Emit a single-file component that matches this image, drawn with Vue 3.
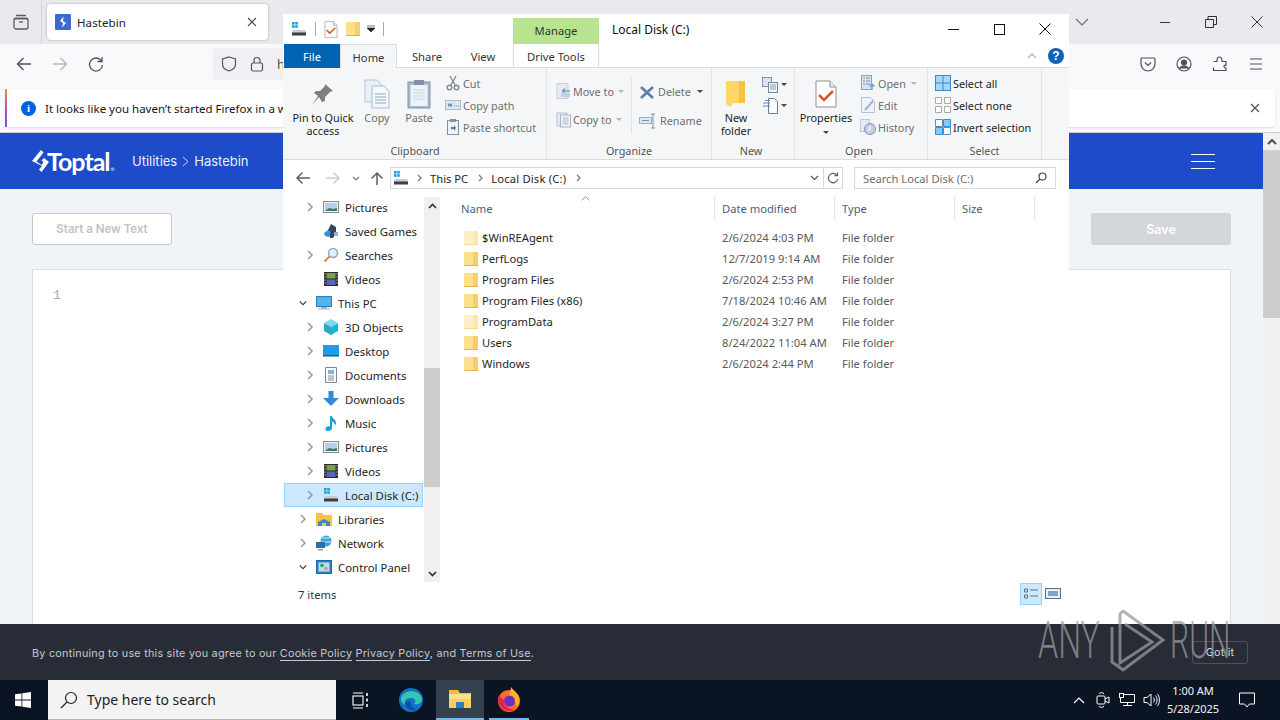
<script setup>
const smallClip = [
  { label: 'Cut', icon: 'cut' },
  { label: 'Copy path', icon: 'copypath' },
  { label: 'Paste shortcut', icon: 'pasteshort' }
]
const openItems = [
  { label: 'Open', icon: 'openi', caret: true },
  { label: 'Edit', icon: 'edit' },
  { label: 'History', icon: 'history' }
]
const selectItems = [
  { label: 'Select all', icon: 'selall' },
  { label: 'Select none', icon: 'selnone' },
  { label: 'Invert selection', icon: 'selinv' }
]
const tree = [
  { label: 'Pictures', icon: 'pictures', lvl: 2, arrow: 'r' },
  { label: 'Saved Games', icon: 'games', lvl: 2 },
  { label: 'Searches', icon: 'search', lvl: 2, arrow: 'r' },
  { label: 'Videos', icon: 'video', lvl: 2 },
  { label: 'This PC', icon: 'pc', lvl: 1, arrow: 'd' },
  { label: '3D Objects', icon: 'cube', lvl: 2, arrow: 'r' },
  { label: 'Desktop', icon: 'desktop', lvl: 2, arrow: 'r' },
  { label: 'Documents', icon: 'docs', lvl: 2, arrow: 'r' },
  { label: 'Downloads', icon: 'down', lvl: 2, arrow: 'r' },
  { label: 'Music', icon: 'music', lvl: 2, arrow: 'r' },
  { label: 'Pictures', icon: 'pictures', lvl: 2, arrow: 'r' },
  { label: 'Videos', icon: 'video', lvl: 2, arrow: 'r' },
  { label: 'Local Disk (C:)', icon: 'drive', lvl: 2, arrow: 'r', sel: true },
  { label: 'Libraries', icon: 'libs', lvl: 1, arrow: 'r' },
  { label: 'Network', icon: 'net', lvl: 1, arrow: 'r' },
  { label: 'Control Panel', icon: 'cpanel', lvl: 1, arrow: 'd' }
]
const files = [
  { name: '$WinREAgent', date: '2/6/2024 4:03 PM', faded: true },
  { name: 'PerfLogs', date: '12/7/2019 9:14 AM' },
  { name: 'Program Files', date: '2/6/2024 2:53 PM' },
  { name: 'Program Files (x86)', date: '7/18/2024 10:46 AM' },
  { name: 'ProgramData', date: '2/6/2024 3:27 PM', faded: true },
  { name: 'Users', date: '8/24/2022 11:04 AM' },
  { name: 'Windows', date: '2/6/2024 2:44 PM' }
]
</script>

<template>
  <div class="root">
    <svg class="sprite" aria-hidden="true">
      <defs>
        <symbol id="drive" viewBox="0 0 16 16">
          <rect x="1" y="1" width="2.6" height="2.6" fill="#17a2dc"/><rect x="4.2" y="1" width="2.6" height="2.6" fill="#17a2dc"/>
          <rect x="1" y="4.2" width="2.6" height="2.6" fill="#17a2dc"/><rect x="4.2" y="4.2" width="2.6" height="2.6" fill="#17a2dc"/>
          <path d="M2 9h12l1 2v3H1v-3z" fill="#c9cdd1"/><rect x="1" y="11.500" width="14" height="3" fill="#3b3f44"/>
        </symbol>
        <symbol id="folder" viewBox="0 0 14 16">
          <path d="M0 1h13l1 1v13H0z" fill="#fce08a"/><path d="M9 1h5v14H9z" fill="#f7cf68"/><path d="M0 14h14v1H0z" fill="#e8b54a"/>
        </symbol>
        <symbol id="folderf" viewBox="0 0 14 16">
          <path d="M0 1h13l1 1v13H0z" fill="#fdf0c8"/><path d="M9 1h5v14H9z" fill="#fae8b4"/><path d="M0 14h14v1H0z" fill="#f2dc9e"/>
        </symbol>
        <symbol id="pin" viewBox="0 0 24 24">
          <path d="M14 2l8 7-3 1-5 5 0 4-3 1-3-5-7 8 6-9-4-3 2-2 4 0 5-5z" fill="#7f7f7f"/>
        </symbol>
        <symbol id="copy" viewBox="0 0 26 30">
          <path d="M1 1h12l4 4v18H1z" fill="#eaf0f7" stroke="#b7c5d6"/><path d="M8 7h12l5 5v17H8z" fill="#f5f8fc" stroke="#a9bbd0"/>
          <path d="M11 15h11M11 18h11M11 21h11M11 24h11" stroke="#8fa6c2"/>
        </symbol>
        <symbol id="paste" viewBox="0 0 24 30">
          <rect x="1" y="3" width="22" height="26" fill="#a9bad0" stroke="#8193aa"/><rect x="3.500" y="6" width="17" height="21" fill="#eef3f9"/><rect x="7" y="1" width="10" height="5" fill="#7e8fa6"/>
          <path d="M6 11h12M6 14h12M6 17h12M6 20h12" stroke="#c7d3e2"/>
        </symbol>
        <symbol id="cut" viewBox="0 0 16 16">
          <path d="M5 1l5 9M11 1L6 10" stroke="#8a8a8a" stroke-width="1.400" fill="none"/><circle cx="4.500" cy="12.500" r="2.300" fill="none" stroke="#7d8a9a" stroke-width="1.400"/><circle cx="11.500" cy="12.500" r="2.300" fill="none" stroke="#7d8a9a" stroke-width="1.400"/>
        </symbol>
        <symbol id="copypath" viewBox="0 0 16 16">
          <rect x="0.500" y="3.500" width="15" height="9" fill="#dfe9f5" stroke="#a8bbd2"/><path d="M3 6.500l1 3 1-3 1 3 1-3M9 9h1M11 9h1M13 9h1" stroke="#6f85a0" fill="none"/>
        </symbol>
        <symbol id="pasteshort" viewBox="0 0 16 16">
          <rect x="2.500" y="1.500" width="11" height="14" fill="#eef3f9" stroke="#7f90a8"/><rect x="5" y="0" width="6" height="3" fill="#7f90a8"/><path d="M6 11V8h3V6l2 3-2 3v-2H7z" fill="#5e7795"/>
        </symbol>
        <symbol id="moveto" viewBox="0 0 16 16">
          <rect x="1" y="0.500" width="11" height="15" fill="#e4ebf4" stroke="#c4d0de"/><path d="M14 8H7M9 5.500L6.500 8 9 10.500" stroke="#7d9ec4" stroke-width="1.500" fill="none"/><rect x="5" y="10" width="9" height="4" fill="#bdcfe4"/>
        </symbol>
        <symbol id="copyto" viewBox="0 0 16 16">
          <rect x="1" y="1" width="10" height="13" fill="#e4ebf4" stroke="#b6c4d5"/><rect x="4.500" y="3" width="10" height="12" fill="#f3f6fa" stroke="#a2b3c8"/><path d="M6.500 6h6M6.500 8h6M6.500 10h6M6.500 12h6" stroke="#a8b8cc"/>
        </symbol>
        <symbol id="del" viewBox="0 0 16 16">
          <path d="M2 3l12 11M14 3L2 14" stroke="#5d7ea8" stroke-width="2.600"/>
        </symbol>
        <symbol id="rename" viewBox="0 0 18 16">
          <rect x="0.500" y="4.500" width="12" height="6" fill="#dfe7f1" stroke="#9aaec6"/><path d="M14 1v14M12 1h4M12 15h4" stroke="#7d90a8" fill="none"/><path d="M3 7.500h7" stroke="#7d90a8"/>
        </symbol>
        <symbol id="newfolder" viewBox="0 0 22 28">
          <path d="M1 1h19v22H8l-3 4-4-3z" fill="#fcd667"/><path d="M14 1h6v22h-6z" fill="#f5c242"/>
        </symbol>
        <symbol id="newitem" viewBox="0 0 18 16">
          <rect x="0.500" y="0.500" width="9" height="9" fill="#d9e5f2" stroke="#7c93ae"/><rect x="6.500" y="5.500" width="9" height="10" fill="#eef3f9" stroke="#6f87a3"/><path d="M8 8h6M8 10h6M8 12h6" stroke="#8ba0b8"/>
        </symbol>
        <symbol id="easy" viewBox="0 0 18 16">
          <path d="M6.500 0.500h6l3 3v12h-9z" fill="#fff" stroke="#6e7f93"/><path d="M1 5h7M1 8h7M3 2.500h5" stroke="#5e8cb8"/>
        </symbol>
        <symbol id="props" viewBox="0 0 22 28">
          <path d="M1 1h14l6 6v20H1z" fill="#fff" stroke="#8a8f96"/><path d="M15 1v6h6" fill="#e9ecef" stroke="#8a8f96"/>
          <path d="M4 15l5 5 9-9" stroke="#d9552b" stroke-width="2.500" fill="none"/>
        </symbol>
        <symbol id="openi" viewBox="0 0 16 16">
          <rect x="1.500" y="0.500" width="10" height="14" fill="#dbe5f0" stroke="#8ca2bc"/><path d="M3 3h2M3 6h2M3 9h2M6 3h4M6 6h4M6 9h4" stroke="#7a90aa"/><path d="M12 15V9M9.500 11.500L12 9l2.500 2.500" stroke="#7d9ec4" stroke-width="1.500" fill="none"/>
        </symbol>
        <symbol id="edit" viewBox="0 0 16 16">
          <path d="M1.500 0.500h9l4 4v11h-13z" fill="#eef3f9" stroke="#b4c3d4"/><path d="M5 13l8-9" stroke="#9fb2c8" stroke-width="2"/>
        </symbol>
        <symbol id="history" viewBox="0 0 16 16">
          <rect x="0.500" y="0.500" width="9" height="12" fill="#e4ebf4" stroke="#b9c7d7"/><circle cx="10" cy="10" r="5.500" fill="#c0d1e5" stroke="#7f96b2"/><path d="M10 7v3l-2 2" stroke="#fff" stroke-width="1.200" fill="none"/>
        </symbol>
        <symbol id="selall" viewBox="0 0 16 16">
          <rect width="16" height="16" fill="#2e8cd3"/><rect x="1" y="1" width="6.500" height="6.500" fill="#a9d8f7"/><rect x="8.500" y="1" width="6.500" height="6.500" fill="#a9d8f7"/><rect x="1" y="8.500" width="6.500" height="6.500" fill="#a9d8f7"/><rect x="8.500" y="8.500" width="6.500" height="6.500" fill="#a9d8f7"/>
        </symbol>
        <symbol id="selnone" viewBox="0 0 16 16">
          <path d="M.5.500h6v6h-6zM9.500.500h6v6h-6zM.5 9.500h6v6h-6zM9.500 9.500h6v6h-6z" fill="#fff" stroke="#a8a8a8"/>
        </symbol>
        <symbol id="selinv" viewBox="0 0 16 16">
          <path d="M.5.500h7v7h-7zM8.500 8.500h7v7h-7z" fill="#fff" stroke="#5f8fb8"/><path d="M8.500.500h7v7h-7zM.5 8.500h7v7h-7z" fill="#8cc8f2" stroke="#2e8cd3"/>
        </symbol>
        <symbol id="pictures" viewBox="0 0 16 16">
          <rect x="0.500" y="2.500" width="15" height="11" fill="#f2f5f8" stroke="#7f8c99"/><rect x="2" y="4" width="12" height="8" fill="#b7cfe2"/><path d="M2 12l4-3 4 1 4-1v3z" fill="#4f6d6b"/>
        </symbol>
        <symbol id="games" viewBox="0 0 16 16">
          <path d="M8 1l5 3v6l-3 5H7l-1-5-1-3z" fill="#34465e"/><path d="M1 10l4-3 3 2-2 5-4-1z" fill="#3e8ed0"/><rect x="11" y="9" width="4" height="4" fill="#9fb3c8"/>
        </symbol>
        <symbol id="search" viewBox="0 0 16 16">
          <circle cx="10" cy="6" r="4.500" fill="#dff0fa" stroke="#8fa9bd" stroke-width="1.500"/><path d="M6.500 9.500L1.500 14.500" stroke="#c98f3c" stroke-width="2"/>
        </symbol>
        <symbol id="video" viewBox="0 0 16 16">
          <rect x="1" y="1" width="14" height="14" fill="#2c2c2c"/><rect x="3.500" y="2" width="9" height="5.500" fill="#7fa04a"/><rect x="3.500" y="8.500" width="9" height="5.500" fill="#5565b8"/>
          <path d="M1.500 3h1M1.500 6h1M1.500 9h1M1.500 12h1M13.500 3h1M13.500 6h1M13.500 9h1M13.500 12h1" stroke="#fff"/>
        </symbol>
        <symbol id="pc" viewBox="0 0 16 16">
          <rect x="0.500" y="1.500" width="15" height="10" fill="#4fb4ec" stroke="#2c80c0"/><rect x="5" y="12" width="6" height="1.500" fill="#9aa8b5"/><rect x="2" y="13.500" width="12" height="1" fill="#aab5c0"/>
        </symbol>
        <symbol id="cube" viewBox="0 0 16 16">
          <path d="M8 0l7 4-7 4-7-4z" fill="#79dcea"/><path d="M1 4l7 4v8l-7-4z" fill="#2ea7c4"/><path d="M15 4l-7 4v8l7-4z" fill="#17b8d6"/>
        </symbol>
        <symbol id="desktop" viewBox="0 0 16 16">
          <rect y="2" width="16" height="11" fill="#1f9be8"/><rect y="12" width="16" height="1.500" fill="#0b5ea8"/>
        </symbol>
        <symbol id="docs" viewBox="0 0 16 16">
          <path d="M2.500 0.500h11v15h-11z" fill="#fff" stroke="#7d8894"/><path d="M5 3h6v4H5z" fill="#7fb2d8"/><path d="M5 9h6M5 11h6M5 13h6" stroke="#7d8894"/>
        </symbol>
        <symbol id="down" viewBox="0 0 16 16">
          <path d="M5.500 0h5v7H16l-8 8-8-8h5.500z" fill="#2f89d8"/>
        </symbol>
        <symbol id="music" viewBox="0 0 16 16">
          <path d="M7 1h2c0 3 4 3 4 7 0 1-.5 2-1 2.500.2-2-1.500-3.500-3-4V13c0 2-2 3-4 3s-3-1-2.500-2.500S5 11 7 11.500z" fill="#1f9be0"/>
        </symbol>
        <symbol id="libs" viewBox="0 0 16 16">
          <path d="M0 2h6l2 2h8v11H0z" fill="#f5c542"/><path d="M2 15v-4l6-3 6 3v4h-4v-3H6v3z" fill="#3b89c9"/>
        </symbol>
        <symbol id="net" viewBox="0 0 16 16">
          <circle cx="10" cy="6" r="5.500" fill="#39a3df"/><path d="M6 3h8M5 7h10" stroke="#cfeafa"/><rect x="0" y="7" width="9" height="6" fill="#2a6fa8"/><rect x="2" y="14" width="5" height="1.500" fill="#8aa0b5"/>
        </symbol>
        <symbol id="cpanel" viewBox="0 0 16 16">
          <rect x="0.500" y="1.500" width="15" height="13" fill="#2e82c4" stroke="#1f6aa6"/><rect x="2.500" y="3.500" width="11" height="9" fill="#b8def5"/><circle cx="6" cy="6.500" r="1.800" fill="#2e9e55"/><circle cx="10" cy="9.500" r="1.800" fill="#d9a02a"/>
        </symbol>
      </defs>
    </svg>

    <div class="browser">
      <div class="tabbar">
        <div class="tabside">
          <svg width="18" height="18" viewBox="0 0 18 18" fill="none" stroke="#5b5b66" stroke-width="1.300"><path d="M4 2.500h10M2 5.500h14"/><rect x="2" y="5.500" width="14" height="10.500" rx="2"/><path d="M7 9h4"/></svg>
        </div>
        <div class="tab">
          <svg class="fav" width="16" height="16" viewBox="0 0 16 16"><rect width="16" height="16" rx="1" fill="#3c6ad0"/><path d="M8.500 2.500L5 7l3 2-1 4.500L11 9 8 7z" fill="#fff"/></svg>
          <span class="tabtxt">Hastebin</span>
          <svg class="tabx" width="10" height="10" viewBox="0 0 10 10" stroke="#4a4a55" stroke-width="1.100"><path d="M1 1l8 8M9 1L1 9"/></svg>
        </div>
        <div class="tabspace"></div>
        <svg class="tabdrop" width="14" height="8" viewBox="0 0 14 8" fill="none" stroke="#70707a" stroke-width="1.200"><path d="M1 1l6 6 6-6"/></svg>
        <div class="fxwin">
          <svg width="12" height="12" viewBox="0 0 12 12" stroke="#333"><path d="M1 6.500h10"/></svg>
          <svg width="12" height="12" viewBox="0 0 12 12" stroke="#333" fill="none"><path d="M.5 3.500h8v8h-8zM3 3.500v-3h8.500v8h-3"/></svg>
          <svg width="12" height="12" viewBox="0 0 12 12" stroke="#333"><path d="M.5.500l11 11M11.500.500l-11 11"/></svg>
        </div>
      </div>
      <div class="toolbar">
        <svg class="tb first" width="16" height="16" viewBox="0 0 16 16" fill="none" stroke="#4f4f59" stroke-width="1.300"><path d="M15 8H1.500M7.500 2L1.500 8l6 6"/></svg>
        <svg class="tb" width="16" height="16" viewBox="0 0 16 16" fill="none" stroke="#b6b6bc" stroke-width="1.300"><path d="M1 8h13.500M8.500 2l6 6-6 6"/></svg>
        <svg class="tb" width="16" height="16" viewBox="0 0 16 16" fill="none" stroke="#4f4f59" stroke-width="1.300"><path d="M13.500 5A6.500 6.500 0 1 0 14.500 9M14 1v4.500H9.500"/></svg>
        <div class="urlbar">
          <svg width="16" height="16" viewBox="0 0 16 16" fill="none" stroke="#55555f" stroke-width="1.200"><path d="M8 1l6.500 2v5c0 3.500-3 6-6.500 7-3.500-1-6.500-3.500-6.500-7V3z"/></svg>
          <svg width="14" height="16" viewBox="0 0 14 16" fill="none" stroke="#55555f" stroke-width="1.200"><rect x="1.500" y="7" width="11" height="8" rx="1.500"/><path d="M4 7V4.500a3 3 0 0 1 6 0V7"/></svg>
          <span class="urltxt">h</span>
        </div>
        <div class="tbspace"></div>
        <svg class="tbr" width="16" height="16" viewBox="0 0 16 16" fill="none" stroke="#4f4f59" stroke-width="1.200"><path d="M2 2h12a1 1 0 0 1 1 1v5a7 7 0 0 1-14 0V3a1 1 0 0 1 1-1z"/><path d="M5 6.500L8 9.500l3-3"/></svg>
        <svg class="tbr" width="16" height="16" viewBox="0 0 16 16" fill="none" stroke="#4f4f59" stroke-width="1.200"><circle cx="8" cy="8" r="7"/><circle cx="8" cy="6.500" r="2.500" fill="#4f4f59"/><path d="M3.500 12.500c1-2 3-2.500 4.500-2.500s3.500.5 4.500 2.500" fill="#4f4f59"/></svg>
        <svg class="tbr" width="16" height="16" viewBox="0 0 16 16" fill="none" stroke="#4f4f59" stroke-width="1.200"><path d="M1.500 5.500H5C5 2 6 1 7.500 1S10 2 10 5.500h4v4c-1.500 0-2-.5-2 1s.5 1.500 2 1.500v2.500H1.500v-3"/></svg>
        <svg class="tbr" width="16" height="16" viewBox="0 0 16 16" stroke="#4f4f59" stroke-width="1.200"><path d="M2 3h12M2 8h12M2 13h12"/></svg>
      </div>
      <div class="notifwrap">
        <div class="notif">
          <span class="stripe"></span>
          <span class="infoi">i</span>
          <span class="notiftxt">It looks like you haven’t started Firefox in a while.</span>
          <svg class="notifx" width="10" height="10" viewBox="0 0 10 10" stroke="#4a4a55" stroke-width="1.100"><path d="M1 1l8 8M9 1L1 9"/></svg>
        </div>
      </div>
      <div class="page">
        <div class="pagemain">
          <header class="hero">
            <svg width="17" height="23" viewBox="0 0 17 23" fill="#fff"><path d="M9 0l2.500 2.500L4.500 11.500l5 3.500 2-3-2-1.500 2.500-2.500 5 4-7.500 10L7 19.500l3-3.500-10-5z"/></svg>
            <span class="logo">Toptal<i class="logodot">.</i></span>
            <span class="crumb">Utilities</span>
            <svg class="crumbsep" width="7" height="11" viewBox="0 0 7 11" fill="none" stroke="#cfdcf7"><path d="M1 1l5 4.500L1 10"/></svg>
            <span class="crumb">Hastebin</span>
            <span class="heroSpace"></span>
            <span class="burger"><i></i><i></i><i></i></span>
          </header>
          <div class="actions">
            <button class="btn-new">Start a New Text</button>
            <button class="btn-save">Save</button>
          </div>
          <div class="editor"><span class="ln">1</span></div>
        </div>
        <div class="pagescroll">
          <svg class="arrow-up" width="10" height="6" viewBox="0 0 10 6" fill="none" stroke="#4c4c4c" stroke-width="2"><path d="M1 5l4-4 4 4"/></svg>
          <div class="pagethumb"></div>
        </div>
      </div>
      <div class="cookie">
        <span class="cookietxt">By continuing to use this site you agree to our <a>Cookie Policy</a> <a>Privacy Policy</a>, and <a>Terms of Use</a>.</span>
        <span class="gotit">Got it</span>
      </div>
    </div>

    <div class="taskbar">
      <div class="start">
        <svg width="16" height="16" viewBox="0 0 16 16" fill="#fff"><path d="M0 2.300l6.500-.9v6.200H0zM7.300 1.300L16 0v7.600H7.300zM0 8.400h6.500v6.200L0 13.700zM7.300 8.400H16V16l-8.700-1.300z"/></svg>
      </div>
      <div class="tsearch">
        <svg width="18" height="18" viewBox="0 0 18 18" fill="none" stroke="#222" stroke-width="1.200"><circle cx="11" cy="7" r="5.500"/><path d="M7 11l-6 6"/></svg>
        <span>Type here to search</span>
      </div>
      <div class="tview">
        <svg width="17" height="17" viewBox="0 0 17 17" fill="none" stroke="#fff" stroke-width="1.100"><path d="M1 1h10M1 16h10"/><rect x="1" y="4" width="10" height="9"/><path d="M15 1v3M15 6.500v3M15 12v3" stroke-width="1.600"/></svg>
      </div>
      <div class="tapp edge">
        <svg width="24" height="24" viewBox="0 0 24 24"><circle cx="12" cy="12" r="12" fill="#1173c6"/><path d="M2 10C4 2 20 0 23 11c.5 4-4 6-8 5 3-3 1-6-3-6-5 0-7 3-6 7C3 15 1.500 13 2 10z" fill="#35c6b0"/><path d="M6 15c0 5 6 9 12 6-4 0-7-3-6-7-3-1-6 0-6 1z" fill="#0d4fa0"/></svg>
      </div>
      <div class="tapp active">
        <svg width="24" height="20" viewBox="0 0 24 20"><path d="M1 1h9l2 3h11v15H1z" fill="#f4b93a"/><rect x="1" y="5" width="22" height="5" fill="#fbe08a"/><rect x="1" y="10" width="22" height="9" fill="#f9cf5b"/><rect x="8" y="13" width="8" height="6" fill="#2b7fbf"/></svg>
      </div>
      <div class="tapp fox">
        <svg width="24" height="25" viewBox="0 0 24 25"><circle cx="12" cy="14" r="11" fill="#ff6a2b"/><path d="M14 0c2 3 6 5 8 10 1 4 0 7-2 10-1-6-5-9-9-9 1-4 3-7 3-11z" fill="#ffb11f"/><path d="M2 8c-2 6 0 12 5 15 4 2 8 1 11-1-6 1-12-3-11-9C5 12 3 10 2 8z" fill="#e8214a"/><circle cx="12.500" cy="14" r="5.500" fill="#6b2fc0"/></svg>
      </div>
      <div class="tspace"></div>
      <div class="tray">
        <span class="trayi"><svg width="12" height="7" viewBox="0 0 12 7" fill="none" stroke="#fff" stroke-width="1.200"><path d="M1 6l5-5 5 5"/></svg></span>
        <span class="trayi"><svg width="14" height="18" viewBox="0 0 14 18" fill="none" stroke="#fff"><rect x="1" y="5" width="8" height="8" rx="1"/><path d="M9 8l4-2v6l-4-2M3 2.500c1.500-1 4-1 5 0M3 15.500c1.500 1 4 1 5 0"/></svg></span>
        <span class="trayi"><svg width="16" height="14" viewBox="0 0 16 14" fill="none" stroke="#fff"><path d="M4 1.500h11.500v8H1.500V5M8.500 9.500v3M4 12.500h9"/><rect x="0.500" y="0.500" width="4" height="4"/></svg></span>
        <span class="trayi"><svg width="17" height="14" viewBox="0 0 17 14" fill="none" stroke="#fff"><path d="M1 4.500h3L8 1v12L4 9.500H1zM10.500 4.500c1 1 1 4 0 5M12.500 2.500c2 2 2 7 0 9M14.500 1c2.500 3 2.500 9 0 12"/></svg></span>
      </div>
      <div class="clock"><span>1:00 AM</span><span>5/28/2025</span></div>
      <div class="notifyc">
        <svg width="16" height="16" viewBox="0 0 16 16" fill="none" stroke="#fff"><path d="M.5 1h15v11h-5L8 15l-2.500-3H.5z"/></svg>
      </div>
    </div>

    <section class="win">
      <div class="titlebar">
        <div class="qat">
          <svg width="16" height="16"><use href="#drive"/></svg>
          <i class="qsep"></i>
          <svg class="q-p" width="14" height="17"><use href="#props"/></svg>
          <svg class="q-f" width="14" height="16"><use href="#folder"/></svg>
          <svg class="q-c" width="8" height="8" viewBox="0 0 8 8"><path d="M0 1h8M0 3h8L4 7z" fill="#222" stroke="#222" stroke-width=".6"/></svg>
          <i class="qsep q-last"></i>
        </div>
        <div class="manage">Manage</div>
        <div class="wintitle">Local Disk (C:)</div>
        <div class="wspace"></div>
        <div class="wbtn"><svg width="11" height="11" viewBox="0 0 11 11" stroke="#111"><path d="M0 5.500h11"/></svg></div>
        <div class="wbtn"><svg width="11" height="11" viewBox="0 0 11 11" fill="none" stroke="#111"><rect x=".5" y=".5" width="10" height="10"/></svg></div>
        <div class="wbtn"><svg width="12" height="12" viewBox="0 0 12 12" stroke="#111"><path d="M.5.500l11 11M11.500.500l-11 11"/></svg></div>
      </div>

      <div class="tabsrow">
        <div class="t-file">File</div>
        <div class="t-home">Home</div>
        <div class="t-share">Share</div>
        <div class="t-view">View</div>
        <div class="t-drive">Drive Tools</div>
        <div class="wspace"></div>
        <svg class="collapse" width="10" height="6" viewBox="0 0 10 6" fill="none" stroke="#b5b5b5" stroke-width="1.300"><path d="M1 5l4-4 4 4"/></svg>
        <span class="help">?</span>
      </div>

      <div class="ribbon">
        <div class="group g-clip">
          <div class="gbody">
            <div class="big w-pin"><span class="bigi"><svg width="24" height="24"><use href="#pin"/></svg></span><span class="biglab">Pin to Quick<br>access</span></div>
            <div class="big w-copy dim"><span class="bigi"><svg width="26" height="30"><use href="#copy"/></svg></span><span class="biglab">Copy</span></div>
            <div class="big w-paste dim"><span class="bigi"><svg width="24" height="30"><use href="#paste"/></svg></span><span class="biglab">Paste</span></div>
            <div class="smallcol m-clip">
              <div v-for="s in smallClip" :key="s.label" class="sm dim"><svg width="16" height="16"><use :href="'#' + s.icon"/></svg><span>{{ s.label }}</span></div>
            </div>
          </div>
          <div class="glabel">Clipboard</div>
        </div>

        <div class="group g-org">
          <div class="gbody">
            <div class="orgcol first">
              <div class="orgitem dim"><svg width="16" height="16"><use href="#moveto"/></svg><span>Move to</span><b class="car lite"></b></div>
              <div class="orgitem dim"><svg width="16" height="16"><use href="#copyto"/></svg><span>Copy to</span><b class="car lite"></b></div>
            </div>
            <div class="orgcol">
              <div class="orgitem dim"><svg width="16" height="16"><use href="#del"/></svg><span>Delete</span><b class="car"></b></div>
              <div class="orgitem dim"><svg width="18" height="16"><use href="#rename"/></svg><span>Rename</span></div>
            </div>
          </div>
          <div class="glabel">Organize</div>
        </div>

        <div class="group g-new">
          <div class="gbody">
            <div class="big w-newf"><span class="bigi"><svg width="22" height="28"><use href="#newfolder"/></svg></span><span class="biglab">New<br>folder</span></div>
            <div class="newcol">
              <div class="newitem"><svg width="18" height="16"><use href="#newitem"/></svg><b class="car"></b></div>
              <div class="newitem"><svg width="18" height="16"><use href="#easy"/></svg><b class="car"></b></div>
            </div>
          </div>
          <div class="glabel nudge">New</div>
        </div>

        <div class="group g-open">
          <div class="gbody">
            <div class="big w-prop"><span class="bigi"><svg width="22" height="28"><use href="#props"/></svg></span><span class="biglab">Properties<br><b class="car"></b></span></div>
            <div class="smallcol m-open">
              <div v-for="s in openItems" :key="s.label" class="sm dim"><svg width="16" height="16"><use :href="'#' + s.icon"/></svg><span>{{ s.label }}</span><b v-if="s.caret" class="car lite"></b></div>
            </div>
          </div>
          <div class="glabel nudge">Open</div>
        </div>

        <div class="group g-sel">
          <div class="gbody">
            <div class="smallcol m-sel">
              <div v-for="s in selectItems" :key="s.label" class="sm"><svg width="16" height="16"><use :href="'#' + s.icon"/></svg><span>{{ s.label }}</span></div>
            </div>
          </div>
          <div class="glabel">Select</div>
        </div>
      </div>

      <div class="addr">
        <svg class="nav n-back" width="16" height="14" viewBox="0 0 16 14" fill="none" stroke="#5e5e5e" stroke-width="1.500"><path d="M15 7H2M7.500 1.500L2 7l5.500 5.500"/></svg>
        <svg class="nav n-fwd" width="16" height="14" viewBox="0 0 16 14" fill="none" stroke="#cfcfcf" stroke-width="1.500"><path d="M1 7h13M8.500 1.500L14 7l-5.500 5.500"/></svg>
        <svg class="nav n-drop" width="8" height="5" viewBox="0 0 8 5" fill="none" stroke="#777" stroke-width="1.200"><path d="M1 1l3 3 3-3"/></svg>
        <svg class="nav n-up" width="14" height="14" viewBox="0 0 14 14" fill="none" stroke="#5e5e5e" stroke-width="1.500"><path d="M7 14V2M1.500 7.500L7 2l5.500 5.500"/></svg>
        <div class="addrbox">
          <svg width="16" height="16"><use href="#drive"/></svg>
          <svg class="ch c1" width="5" height="8" viewBox="0 0 5 8" fill="none" stroke="#777" stroke-width="1.200"><path d="M1 1l3 3-3 3"/></svg>
          <span class="ac1">This PC</span>
          <svg class="ch c2" width="5" height="8" viewBox="0 0 5 8" fill="none" stroke="#777" stroke-width="1.200"><path d="M1 1l3 3-3 3"/></svg>
          <span class="ac2">Local Disk (C:)</span>
          <svg class="ch c2" width="5" height="8" viewBox="0 0 5 8" fill="none" stroke="#777" stroke-width="1.200"><path d="M1 1l3 3-3 3"/></svg>
          <span class="wspace"></span>
          <svg class="addrdrop" width="9" height="6" viewBox="0 0 9 6" fill="none" stroke="#555" stroke-width="1.200"><path d="M1 1l3.500 3.500L8 1"/></svg>
          <span class="refresh"><svg width="12" height="12" viewBox="0 0 12 12" fill="none" stroke="#555" stroke-width="1.100"><path d="M10 3.500A4.700 4.700 0 1 0 10.700 7M10.500 .5v3.200H7.300"/></svg></span>
        </div>
        <div class="searchbox">
          <span>Search Local Disk (C:)</span>
          <svg width="12" height="12" viewBox="0 0 12 12" fill="none" stroke="#444" stroke-width="1.200"><circle cx="7.500" cy="4.500" r="3.500"/><path d="M5 7l-4 4"/></svg>
        </div>
      </div>

      <div class="body">
        <div class="navtree">
          <div v-for="(t, i) in tree" :key="i" class="trow" :class="['l' + t.lvl, { sel: t.sel }]">
            <span class="arr">
              <svg v-if="t.arrow === 'r'" width="7" height="10" viewBox="0 0 7 10" fill="none" stroke="#9a9a9a" stroke-width="1.500"><path d="M1 1l4 4-4 4"/></svg>
              <svg v-else-if="t.arrow === 'd'" width="10" height="7" viewBox="0 0 10 7" fill="none" stroke="#444" stroke-width="1.500"><path d="M1 1l4 4 4-4"/></svg>
            </span>
            <svg class="ti" width="16" height="16"><use :href="'#' + t.icon"/></svg>
            <span class="tlab">{{ t.label }}</span>
          </div>
        </div>
        <div class="navscroll">
          <svg class="nsa" width="9" height="6" viewBox="0 0 9 6" fill="none" stroke="#333" stroke-width="1.700"><path d="M1 5l3.500-3.500L8 5"/></svg>
          <div class="nsthumb"></div>
          <svg class="nsb" width="9" height="6" viewBox="0 0 9 6" fill="none" stroke="#333" stroke-width="1.700"><path d="M1 1l3.500 3.500L8 1"/></svg>
        </div>
        <div class="list">
          <svg class="sortc" width="9" height="5" viewBox="0 0 9 5" fill="none" stroke="#9a9a9a"><path d="M.5 4.500l4-4 4 4"/></svg>
          <div class="lhead">
            <span class="h-name">Name</span>
            <span class="h-col">Date modified</span>
            <span class="h-col">Type</span>
            <span class="h-size">Size</span>
          </div>
          <div class="lrows">
            <div v-for="f in files" :key="f.name" class="lrow">
              <svg class="fi" width="14" height="16"><use :href="f.faded ? '#folderf' : '#folder'"/></svg>
              <span class="fn">{{ f.name }}</span>
              <span class="fd">{{ f.date }}</span>
              <span class="ft">File folder</span>
            </div>
          </div>
        </div>
      </div>

      <div class="status">
        <span>7 items</span>
        <span class="wspace"></span>
        <span class="vbtn on"><svg width="16" height="14" viewBox="0 0 16 14" fill="none" stroke="#5b6f86"><path d="M1.500 2h3v3h-3zM1.500 8h3v3h-3zM7 3h8M7 9h8"/></svg></span>
        <span class="vbtn"><svg width="16" height="14" viewBox="0 0 16 14"><rect x=".5" y="1.500" width="15" height="10" fill="#e8eff6" stroke="#5b6f86"/><rect x="3" y="4" width="10" height="5" fill="#7ea5c8"/></svg></span>
      </div>
    </section>

    <div class="watermark">
      <span class="w-any">ANY</span>
      <svg class="w-play" width="56" height="62" viewBox="0 0 56 62" fill="none" stroke="#9a9a9a" stroke-opacity=".75" stroke-width="3"><path d="M2 17V52L13 60L53 30L13 1L10 4V53L42 32L15 14"/></svg>
      <span class="w-run">RUN</span>
    </div>
  </div>
</template>

<style>
html, body { margin: 0; overflow: hidden; background: #f0f3f7; }
</style>

<style scoped>
.root { width: 1280px; height: 720px; position: relative; overflow: hidden; font-family: "Noto Sans", "Open Sans", sans-serif; }
.sprite { width: 0; height: 0; position: absolute; }
i { font-style: normal; }

.browser { height: 680px; display: flex; flex-direction: column; background: #f0f3f7; }
.tabbar { height: 44px; flex: none; display: flex; align-items: center; background: #e9e9ee; }
.tabside { width: 42px; height: 44px; display: flex; align-items: center; justify-content: center; border-right: 1px solid #d5d5da; box-sizing: border-box; }
.tab { width: 221px; height: 36px; margin-left: 5px; background: #fff; border-radius: 4px; box-shadow: 0 0 3px rgba(0,0,0,.25); display: flex; align-items: center; padding: 0 11px 0 8px; box-sizing: border-box; font-size: 11.500px; color: #222; }
.tabtxt { margin-left: 6px; flex: 1; letter-spacing: .1px; }
.tabspace { flex: 1; }
.tabdrop { margin-right: 53px; }
.fxwin { width: 138px; display: flex; justify-content: space-around; }

.toolbar { height: 44px; flex: none; display: flex; align-items: center; background: #f9f9fb; padding-bottom: 4px; box-sizing: border-box; }
.tb { margin-right: 20px; }
.tb.first { margin-left: 16px; }
.urlbar { margin-left: 89px; width: 400px; height: 32px; background: #f0f0f4; border-radius: 4px; display: flex; align-items: center; gap: 13px; padding-left: 8px; box-sizing: border-box; font-size: 13px; color: #555; }
.tbspace { flex: 1; }
.tbr { margin-right: 20px; }
.tbr:last-child { margin-right: 16px; }

.notifwrap { height: 45px; flex: none; background: #f9f9fb; border-bottom: 1px solid #cfd0d6; box-sizing: border-box; padding: 1px 5px 0; }
.notif { height: 38px; background: #fff; border-radius: 4px; display: flex; align-items: center; box-shadow: 0 1px 2px rgba(0,0,0,.12); font-size: 11.500px; color: #15141a; position: relative; }
.stripe { width: 2px; height: 38px; background: linear-gradient(#f58a3a, #c14fb0, #7a52d0); }
.infoi { width: 15px; height: 15px; border-radius: 50%; background: #0060df; color: #fff; font: bold 11px/15px "Liberation Serif", serif; text-align: center; margin-left: 14px; }
.notiftxt { margin-left: 9px; flex: 1; }
.notifx { margin-right: 15px; }

.page { flex: 1; display: flex; min-height: 0; }
.pagemain { flex: 1; min-width: 0; display: flex; flex-direction: column; }
.hero { height: 56px; flex: none; background: #1d4bc9; display: flex; align-items: center; padding-left: 32px; color: #e9effc; }
.logo { font: 700 25px/1 Lato, sans-serif; color: #fff; margin-left: -2px; letter-spacing: -1px; width: 85px; }
.logodot { color: #7d9be6; }
.crumb { font: 13px Inter, sans-serif; }
.crumbsep { margin: 0 5px; }
.heroSpace { flex: 1; }
.burger { width: 24px; margin-right: 48px; display: flex; flex-direction: column; gap: 6px; }
.burger i { height: 1px; background: #fff; display: block; }
.actions { display: flex; justify-content: space-between; padding: 24px 32px 24px; }
.actions button { width: 140px; height: 32px; box-sizing: border-box; font: 600 11.500px Inter, sans-serif; border-radius: 3px; padding: 0; }
.actions .btn-save { background: #d3d6da; border: 0; color: #fff; font-size: 12.500px; }
.btn-new { background: #fff; border: 1px solid #c8c8c8; color: #c2c2c2; }
.editor { flex: 1; margin: 0 32px; background: #fff; border: 1px solid #dcdde0; border-bottom: 0; padding: 18px 20px; font: 13px "Liberation Mono", monospace; color: #a8a8a8; }
.pagescroll { width: 17px; flex: none; background: #f1f1f1; display: flex; flex-direction: column; align-items: center; }
.arrow-up { margin: 6px 0 5px; }
.pagethumb { width: 17px; height: 168px; background: #cdcdcd; }

.cookie { height: 56px; flex: none; background: #282c36; display: flex; align-items: center; padding: 3px 32px 0; box-sizing: border-box; justify-content: space-between; color: #c5c9cf; font: 10.800px Inter, sans-serif; letter-spacing: .24px; }
.cookie a { border-bottom: 1px solid #c5c9cf; }
.gotit { width: 56px; height: 23px; border: 1px solid #4d515a; border-radius: 3px; box-sizing: border-box; text-align: center; line-height: 21px; color: #d6d8dc; margin-top: -3px; }

.taskbar { height: 40px; display: flex; align-items: center; background: #0b1422; color: #fff; }
.start { width: 48px; display: flex; justify-content: center; padding-right: 2px; box-sizing: border-box; }
.tsearch { width: 288px; height: 40px; background: #f3f3f3; color: #222; font: 14px "Noto Sans", sans-serif; display: flex; align-items: center; box-sizing: border-box; padding-left: 12px; gap: 9px; border-bottom: 1px solid #b5b5b5; }
.tview { width: 48px; display: flex; justify-content: center; }
.tapp { width: 48px; height: 40px; display: flex; align-items: center; justify-content: center; box-sizing: border-box; }
.edge { margin-left: 3px; }
.active { background: #34424f; border-bottom: 2px solid #76b9ed; margin-left: 1px; }
.fox { width: 40px; border-bottom: 2px solid #76b9ed; margin-left: 5px; }
.tspace { flex: 1; }
.tray { display: flex; align-items: center; }
.trayi { width: 24px; height: 40px; display: flex; align-items: center; justify-content: center; }
.clock { width: 58px; margin-left: 1px; display: flex; flex-direction: column; align-items: center; font-size: 11px; line-height: 18px; color: #f3f3f3; white-space: nowrap; }
.notifyc { width: 50px; margin-right: 8px; display: flex; justify-content: center; }

.win { position: absolute; left: 283px; top: 14px; width: 786px; height: 596px; background: #fff; display: flex; flex-direction: column; font-size: 11.200px; color: #1e1e1e; }
.titlebar { height: 30px; flex: none; display: flex; align-items: center; }
.qat { width: 230px; padding-left: 8px; box-sizing: border-box; display: flex; align-items: center; }
.qsep { width: 1px; height: 14px; background: #a8a8a8; margin-left: 8px; }
.q-p { margin-left: 8px; }
.q-f { margin-left: 8px; }
.q-c { margin-left: 7px; }
.q-last { margin-left: 8px; }
.manage { width: 86px; height: 26px; align-self: flex-end; background: #b9e48f; text-align: center; line-height: 26px; color: #333; }
.wintitle { margin-left: 13px; font-size: 12px; color: #111; }
.wspace { flex: 1; }
.wbtn { width: 46px; height: 30px; display: flex; align-items: center; justify-content: center; }
.wbtn:last-child { margin-right: 1px; }

.tabsrow { height: 24px; flex: none; display: flex; align-items: center; border-bottom: 1px solid #dadbdc; box-sizing: border-box; color: #333; }
.tabsrow > div { height: 24px; line-height: 25px; text-align: center; box-sizing: border-box; }
.t-file { width: 56px; margin-left: 1px; background: #0063b1; color: #fff; }
.t-home { width: 57px; background: #f5f6f7; border: 1px solid #dadbdc; border-bottom: 0; }
.t-share { width: 60px; }
.t-view { width: 52px; }
.t-drive { width: 86px; margin-left: 4px; border: 1px solid #dadbdc; border-top: 0; border-bottom: 0; }
.collapse { margin-right: 11px; }
.help { width: 16px; height: 16px; border-radius: 50%; background: #0c63b8; color: #fff; font: bold 12px/16px "Liberation Sans", sans-serif; text-align: center; margin-right: 5px; }

.ribbon { height: 92px; flex: none; display: flex; background: #f5f6f7; padding-left: 1px; border-bottom: 1px solid #dadbdc; box-sizing: border-box; font-size: 10.800px; }
.group { display: flex; flex-direction: column; border-right: 1px solid #e2e3e4; box-sizing: border-box; }
.g-clip { width: 263px; }
.g-org { width: 165px; }
.g-new { width: 83px; }
.g-open { width: 133px; }
.g-sel { width: 114px; }
.gbody { flex: 1; display: flex; min-height: 0; }
.glabel { height: 19px; text-align: center; color: #555; line-height: 22px; }
.nudge { padding-right: 4px; }
.big { display: flex; flex-direction: column; align-items: center; padding-top: 8px; }
.bigi { height: 35px; display: flex; align-items: center; justify-content: center; }
.biglab { text-align: center; line-height: 13px; white-space: nowrap; }
.w-pin { width: 78px; }
.w-copy { width: 30px; }
.w-paste { width: 30px; margin-left: 12px; }
.w-newf { width: 48px; }
.w-prop { width: 62px; }
.dim { color: #6e6e6e; }
.smallcol { padding-top: 4px; display: flex; flex-direction: column; }
.m-clip { margin-left: 11px; }
.m-open { margin-left: 3px; }
.m-sel { margin-left: 7px; }
.sm { height: 22px; display: flex; align-items: center; gap: 2px; white-space: nowrap; }
.car { display: inline-block; width: 0; height: 0; border: 3px solid transparent; border-top: 3px solid #444; border-bottom: 0; margin-left: 3px; vertical-align: middle; }
.car.lite { border-top-color: #b5b5b5; }
.w-prop .car { margin-left: 0; }
.orgcol { padding-top: 9px; display: flex; flex-direction: column; margin-left: 7px; }
.orgcol.first { width: 76px; margin-left: 9px; border-right: 1px solid #e2e3e4; box-sizing: border-box; height: 57px; margin-top: 9px; padding-top: 0; }
.orgitem { height: 29px; display: flex; align-items: center; gap: 3px; white-space: nowrap; }
.orgcol.first .orgitem { gap: 1px; }
.newcol { padding-top: 6px; margin-left: 2px; display: flex; flex-direction: column; }
.newitem { height: 21px; display: flex; align-items: center; }
.newitem .car { margin-left: 1px; }

.addr { height: 36px; flex: none; display: flex; align-items: center; position: relative; }
.n-back { margin-left: 12px; }
.n-fwd { margin-left: 14px; }
.n-drop { margin-left: 11px; }
.n-up { margin-left: 10px; }
.addrbox { width: 453px; height: 22px; margin-left: 6px; border: 1px solid #d9d9d9; box-sizing: border-box; display: flex; align-items: center; padding-left: 2px; color: #222; }
.c1 { margin-left: 8px; }
.ac1 { margin-left: 8px; }
.c2 { margin-left: 10px; }
.ac2 { margin-left: 8px; letter-spacing: .2px; }
.addrdrop { margin-right: 4px; }
.refresh { width: 18px; height: 20px; border-left: 1px solid #d9d9d9; display: flex; align-items: center; justify-content: center; }
.searchbox { width: 202px; height: 22px; margin-left: 11px; border: 1px solid #d9d9d9; box-sizing: border-box; display: flex; align-items: center; justify-content: space-between; padding: 0 8px; color: #6d6d6d; }

.body { flex: 1; display: flex; min-height: 0; }
.navtree { width: 140px; margin-left: 1px; margin-top: -1px; flex: none; font-size: 11.400px; }
.trow { height: 24px; display: flex; align-items: center; box-sizing: border-box; white-space: nowrap; width: 139px; }
.l1 { padding-left: 15px; }
.l2 { padding-left: 22px; }
.sel { background: #cce8ff; outline: 1px solid #99d1ff; outline-offset: -1px; }
.arr { width: 8px; height: 10px; display: flex; align-items: center; justify-content: center; flex: none; }
.ti { margin-left: 9px; flex: none; }
.tlab { margin-left: 6px; }
.navscroll { width: 16px; flex: none; background: #f0f0f0; position: relative; margin-top: 1px; }
.nsa { position: absolute; left: 4px; top: 6px; }
.nsb { position: absolute; left: 4px; bottom: 5px; }
.nsthumb { position: absolute; left: 0; top: 171px; width: 16px; height: 119px; background: #cdcdcd; }
.list { flex: 1; position: relative; min-width: 0; }
.sortc { position: absolute; left: 141px; top: 0; }
.lhead { height: 24px; display: grid; grid-template-columns: 275px 120px 120px 80px; align-items: center; color: #4c607a; }
.lhead span { height: 24px; line-height: 26px; box-sizing: border-box; border-right: 1px solid #e5e5e5; }
.h-name { padding-left: 21px; }
.h-col, .h-size { padding-left: 7px; }
.lrows { margin-top: 7px; }
.lrow { height: 21px; display: grid; grid-template-columns: 42px 240px 120px 120px; align-items: center; }
.fi { margin-left: 24px; }
.fd, .ft { color: #5a5a5a; }

.status { height: 28px; flex: none; display: flex; align-items: center; padding: 0 5px 4px 15px; box-sizing: border-box; color: #333; }
.vbtn { width: 22px; height: 22px; display: flex; align-items: center; justify-content: center; box-sizing: border-box; }
.vbtn.on { background: #cce8ff; border: 1px solid #99d1ff; }

.watermark { position: absolute; left: 1038px; top: 608px; width: 196px; height: 66px; display: flex; align-items: center; color: rgba(154,154,154,.75); font: 300 52px/1 Roboto, sans-serif; pointer-events: none; }
.w-any { width: 70px; transform: scaleX(.62); transform-origin: left center; }
.w-play { margin-left: 2px; flex: none; }
.w-run { width: 62px; margin-left: 4px; transform: scaleX(.58); transform-origin: left center; }
</style>
